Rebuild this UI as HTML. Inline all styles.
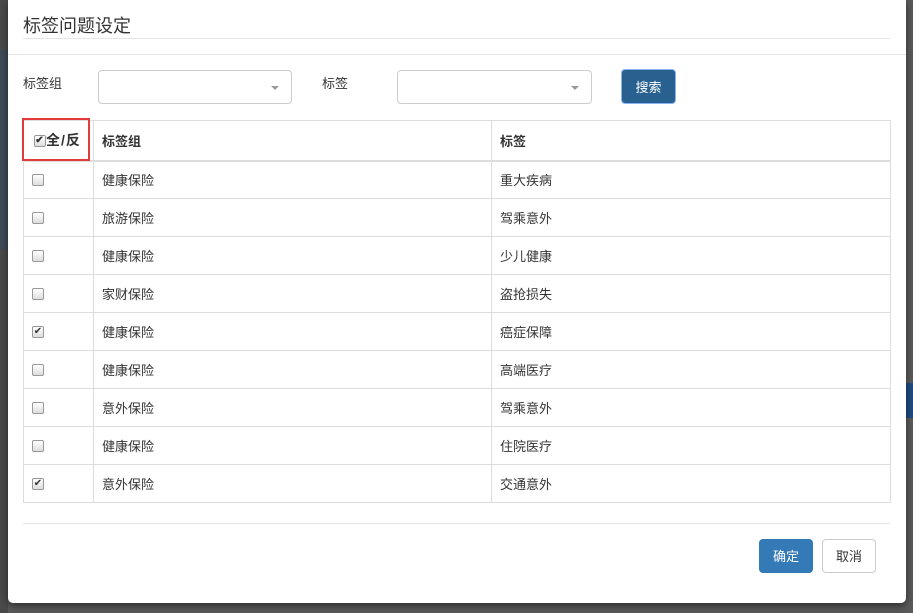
<!DOCTYPE html>
<html><head><meta charset="utf-8"><style>
*{box-sizing:border-box;margin:0;padding:0}
body{width:913px;height:613px;background:#5a5a5a;position:relative;overflow:hidden;font-family:"Liberation Sans","Noto Sans CJK SC",sans-serif;font-size:13px;color:#333}
.bgl{position:absolute;left:0;top:0;width:8px;height:613px;background:#4a4a4a}
.bgl2{position:absolute;left:0;top:50px;width:8px;height:200px;background:#3f4a58}
.bgr{position:absolute;left:905px;top:383px;width:8px;height:35px;background:#1f4b80}
.modal{position:absolute;left:8px;top:0;width:898px;height:603px;background:#fff;border-radius:0 0 5px 5px;box-shadow:0 3px 8px rgba(0,0,0,.5)}
.abs{position:absolute}
.title{left:15px;top:12px;font-size:18px;color:#333}
.line{height:1px;background:#e5e5e5}
.sel{border:1px solid #ccc;border-radius:4px;height:34px;background:#fff}
.caret{position:absolute;right:12px;top:15px;border-left:4px solid transparent;border-right:4px solid transparent;border-top:4px solid #999}
.btn{border-radius:4px;color:#fff;text-align:center;font-size:13px}
table{border-collapse:collapse;position:absolute;left:15px;top:120px;width:868px}
td,th{border:1px solid #ddd;height:38px;padding:0 8px;text-align:left;font-size:13px}
th{font-weight:bold;height:40px;border-bottom:2px solid #ddd;border-top:1px solid #ddd}
.cb{display:inline-block;width:12px;height:12px;border:1px solid #999;border-radius:2px;background:linear-gradient(#fff,#ddd);vertical-align:middle;position:relative;top:-1px;font-size:10px;line-height:10px;text-align:center;color:#333}
</style></head><body>
<div class="bgl"></div><div class="bgl2"></div><div class="bgr"></div>
<div class="modal">
<div class="abs title">标签问题设定</div>
<div class="abs line" style="left:15px;top:38px;width:867px"></div>
<div class="abs line" style="left:0;top:54px;width:898px"></div>
<div class="abs" style="left:15px;top:73px">标签组</div>
<div class="abs sel" style="left:90px;top:70px;width:194px"><span class="caret"></span></div>
<div class="abs" style="left:314px;top:73px">标签</div>
<div class="abs sel" style="left:389px;top:70px;width:195px"><span class="caret"></span></div>
<div class="abs btn" style="left:613px;top:69px;width:55px;height:35px;line-height:35px;background:#286090;border:1px solid #8ab4f0">搜索</div>
<table>
<tr><th style="width:70px;padding:0 0 0 10px;font-size:14px;letter-spacing:1px"><span class="cb">✔</span>全/反</th><th style="width:398px">标签组</th><th>标签</th></tr>
<tr><td><span class="cb"></span></td><td>健康保险</td><td>重大疾病</td></tr>
<tr><td><span class="cb"></span></td><td>旅游保险</td><td>驾乘意外</td></tr>
<tr><td><span class="cb"></span></td><td>健康保险</td><td>少儿健康</td></tr>
<tr><td><span class="cb"></span></td><td>家财保险</td><td>盗抢损失</td></tr>
<tr><td><span class="cb">✔</span></td><td>健康保险</td><td>癌症保障</td></tr>
<tr><td><span class="cb"></span></td><td>健康保险</td><td>高端医疗</td></tr>
<tr><td><span class="cb"></span></td><td>意外保险</td><td>驾乘意外</td></tr>
<tr><td><span class="cb"></span></td><td>健康保险</td><td>住院医疗</td></tr>
<tr><td><span class="cb">✔</span></td><td>意外保险</td><td>交通意外</td></tr>
</table>
<div class="abs" style="left:14px;top:118px;width:68px;height:43px;border:2px solid #e43a3a"></div>
<div class="abs line" style="left:15px;top:523px;width:867px"></div>
<div class="abs btn" style="left:751px;top:539px;width:54px;height:34px;line-height:36px;background:#337ab7">确定</div>
<div class="abs btn" style="left:814px;top:539px;width:54px;height:34px;line-height:34px;background:#fff;color:#333;border:1px solid #ccc">取消</div>
</div>
</body></html>
